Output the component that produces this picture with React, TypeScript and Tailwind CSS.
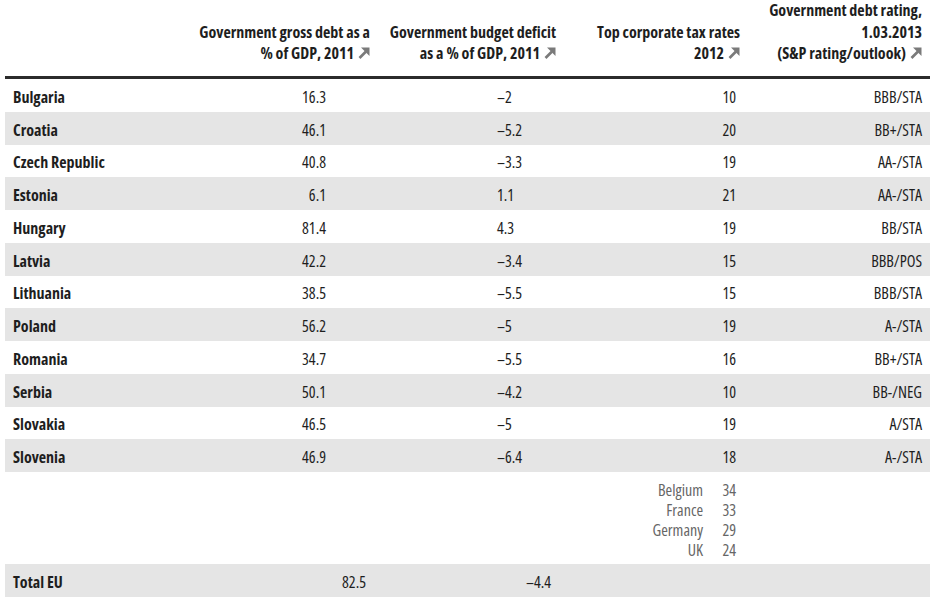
import React from 'react';

type Row = { country: string; debt: string; deficit: string; tax: string; rating: string };

const rows: Row[] = [
  { country: 'Bulgaria', debt: '16.3', deficit: '–2', tax: '10', rating: 'BBB/STA' },
  { country: 'Croatia', debt: '46.1', deficit: '–5.2', tax: '20', rating: 'BB+/STA' },
  { country: 'Czech Republic', debt: '40.8', deficit: '–3.3', tax: '19', rating: 'AA-/STA' },
  { country: 'Estonia', debt: '6.1', deficit: '1.1', tax: '21', rating: 'AA-/STA' },
  { country: 'Hungary', debt: '81.4', deficit: '4.3', tax: '19', rating: 'BB/STA' },
  { country: 'Latvia', debt: '42.2', deficit: '–3.4', tax: '15', rating: 'BBB/POS' },
  { country: 'Lithuania', debt: '38.5', deficit: '–5.5', tax: '15', rating: 'BBB/STA' },
  { country: 'Poland', debt: '56.2', deficit: '–5', tax: '19', rating: 'A-/STA' },
  { country: 'Romania', debt: '34.7', deficit: '–5.5', tax: '16', rating: 'BB+/STA' },
  { country: 'Serbia', debt: '50.1', deficit: '–4.2', tax: '10', rating: 'BB-/NEG' },
  { country: 'Slovakia', debt: '46.5', deficit: '–5', tax: '19', rating: 'A/STA' },
  { country: 'Slovenia', debt: '46.9', deficit: '–6.4', tax: '18', rating: 'A-/STA' },
];

const others = [
  ['Belgium', '34'],
  ['France', '33'],
  ['Germany', '29'],
  ['UK', '24'],
];

const Arrow = () => (
  <svg width="12" height="12" viewBox="0 0 12 12" className="inline-block ml-[4px] -mt-[3px] align-middle">
    <path d="M1.5 11 L8 4.5" stroke="#7a7a7a" strokeWidth="2.6" />
    <path d="M3 0.5 L11.5 0.5 L11.5 9 Z" fill="#7a7a7a" />
  </svg>
);

const cols = 'grid grid-cols-[185px_185px_185px_185px_185px]';

export default function App() {
  return (
    <div className="w-[936px] h-[612px] bg-white text-[#1e1e1e] font-['Open_Sans',sans-serif]">
      <div className="ml-[5px] w-[925px]">
        {/* header */}
        <div className={`${cols} h-[76px] items-end pb-[13px] text-[16px] font-bold font-stretch-condensed leading-[21.5px] text-right whitespace-nowrap`}>
          <div />
          <div className="pr-[5px]">
            Government gross debt as a<br />% of GDP, 2011<Arrow />
          </div>
          <div className="pr-[4px]">
            Government budget deficit<br />as a % of GDP, 2011<Arrow />
          </div>
          <div className="pr-[5px]">
            Top corporate tax rates<br />2012<Arrow />
          </div>
          <div className="pr-[8px]">
            Government debt rating,<br />1.03.2013<br />(S&amp;P rating/outlook)<Arrow />
          </div>
        </div>
        <div className="h-[3px] bg-[#2b2b2b]" />

        {rows.map((r, i) => (
          <div
            key={r.country}
            className={`${cols} h-[32.75px] items-center pt-[3px] text-[16px] font-stretch-[82%] ${i % 2 === 1 ? 'bg-[#e5e5e5]' : 'bg-white'}`}
          >
            <div className="pl-[8px] font-bold font-stretch-condensed">{r.country}</div>
            <div className="text-right pr-[49px]">{r.debt}</div>
            <div className="pl-[122px]">{r.deficit}</div>
            <div className="text-right pr-[9px]">{r.tax}</div>
            <div className="text-right pr-[8px]">{r.rating}</div>
          </div>
        ))}

        <div className={`${cols} h-[92px] items-center text-[16px] font-stretch-[85%]`}>
          <div />
          <div />
          <div />
          <div className="flex justify-end pr-[9px] pt-[4px]">
            <div className="grid grid-cols-[auto_33px] leading-[20px] text-[#666] text-right">
              {others.map(([c, v]) => (
                <React.Fragment key={c}>
                  <span>{c}</span>
                  <span>{v}</span>
                </React.Fragment>
              ))}
            </div>
          </div>
          <div />
        </div>

        <div className={`${cols} h-[33px] items-center pt-[3px] text-[16px] font-stretch-[82%] bg-[#e5e5e5]`}>
          <div className="pl-[8px] font-bold font-stretch-condensed">Total EU</div>
          <div className="text-right pr-[9px]">82.5</div>
          <div className="pl-[151px]">–4.4</div>
          <div />
          <div />
        </div>
      </div>
    </div>
  );
}
